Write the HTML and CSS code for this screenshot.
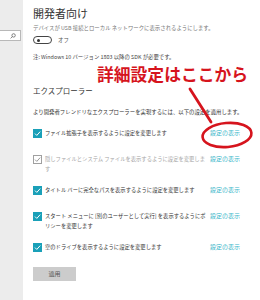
FILE: index.html
```html
<!DOCTYPE html>
<html>
<head>
<meta name="viewport" content="width=device-width, initial-scale=1">
<link rel="stylesheet" href="styles.css">
</head>
<body>

<!-- Sidebar -->
<div class="sidebar">
    <div class="search-box">
        <svg class="search-icon" width="6" height="6" viewBox="0 0 6 6">
            <circle cx="3.6" cy="2.4" r="1.7" fill="none" stroke="#555" stroke-width="0.7"/>
            <line x1="2.4" y1="3.6" x2="0.6" y2="5.4" stroke="#555" stroke-width="0.7"/>
        </svg>
    </div>
</div>

<!-- Page content -->
<div class="content">
    <h1 class="page-title">開発者向け</h1>
    <p class="small muted">デバイスが USB 接続とローカル ネットワークに表示されるようにします。</p>
    <div class="toggle-row">
        <span class="toggle"><span class="knob"></span></span>
        <span class="small">オフ</span>
    </div>
    <p class="small note">注: Windows 10 バージョン 1803 以降の SDK が必要です。</p>

    <h2 class="section-title">エクスプローラー</h2>
    <p class="small desc">より開発者フレンドリなエクスプローラーを実現するには、以下の設定を適用します。</p>

    <div class="setting">
        <span class="check on"><svg viewBox="0 0 9 9"><path d="M2 4.6 L3.8 6.4 L7.2 2.6"/></svg></span>
        <span class="label">ファイル拡張子を表示するように設定を変更します</span>
        <a class="link">設定の表示</a>
    </div>
    <div class="setting">
        <span class="check off"><svg viewBox="0 0 9 9"><path d="M2 4.6 L3.8 6.4 L7.2 2.6"/></svg></span>
        <span class="label disabled">隠しファイルとシステム ファイルを表示するように設定を変更します</span>
        <a class="link">設定の表示</a>
    </div>
    <div class="setting">
        <span class="check on"><svg viewBox="0 0 9 9"><path d="M2 4.6 L3.8 6.4 L7.2 2.6"/></svg></span>
        <span class="label">タイトル バーに完全なパスを表示するように設定を変更します</span>
        <a class="link">設定の表示</a>
    </div>
    <div class="setting">
        <span class="check on"><svg viewBox="0 0 9 9"><path d="M2 4.6 L3.8 6.4 L7.2 2.6"/></svg></span>
        <span class="label">スタート メニューに [別のユーザーとして実行] を表示するようにポリシーを変更します</span>
        <a class="link">設定の表示</a>
    </div>
    <div class="setting last">
        <span class="check on"><svg viewBox="0 0 9 9"><path d="M2 4.6 L3.8 6.4 L7.2 2.6"/></svg></span>
        <span class="label">空のドライブを表示するように設定を変更します</span>
        <a class="link">設定の表示</a>
    </div>

    <button class="apply-btn">適用</button>
</div>

<!-- Annotation -->
<div class="callout">詳細設定はここから</div>
<svg class="callout-mark" width="260" height="300" viewBox="0 0 260 300">
    <line x1="190" y1="89" x2="211" y2="122" stroke="#d6141d" stroke-width="2.8" stroke-linecap="round"/>
    <ellipse cx="227" cy="135" rx="24.5" ry="12" transform="rotate(-5 227 135)" fill="none" stroke="#d6141d" stroke-width="2.6"/>
</svg>

</body>
</html>
```

FILE: styles.css
```css
* {
    box-sizing: border-box;
    margin: 0;
    padding: 0;
}

body {
    font-family: 'Noto Sans CJK JP', 'Noto Sans', sans-serif;
    width: 260px;
    height: 300px;
    display: flex;
    overflow: hidden;
    background: #fff;
    color: #222;
    position: relative;
}

.sidebar {
    width: 23px;
    background-color: #ececec;
    padding-top: 30px;
    flex-shrink: 0;
}

.search-box {
    height: 11px;
    width: 21px;
    background: #fff;
    border: 1px solid #b8b8b8;
    border-left: none;
    display: flex;
    align-items: center;
    justify-content: flex-end;
    padding-right: 4px;
}

.content {
    flex-grow: 1;
    padding-left: 10px;
}

.page-title {
    font-size: 11px;
    font-weight: normal;
    line-height: 14px;
    margin-top: 6px;
    color: #333;
}

.small {
    font-size: 5.4px;
    line-height: 8px;
}

.muted {
    color: #777;
    margin-top: 3.5px;
}

.toggle-row {
    display: flex;
    align-items: center;
    gap: 6px;
    margin-top: 4.5px;
    height: 8px;
    color: #555;
}

.toggle {
    width: 19px;
    height: 8px;
    border: 0.8px solid #444;
    border-radius: 4px;
    display: flex;
    align-items: center;
    padding-left: 2.5px;
    background: #fff;
}

.knob {
    width: 3px;
    height: 3px;
    border-radius: 50%;
    background: #333;
}

.note {
    margin-top: 9px;
    color: #444;
}

.section-title {
    font-size: 7.5px;
    font-weight: normal;
    line-height: 10px;
    margin-top: 24.5px;
    color: #333;
}

.desc {
    margin-top: 12px;
    color: #333;
}

.setting {
    display: flex;
    align-items: flex-start;
    min-height: 15px;
    margin-top: 11px;
    font-size: 5.3px;
    line-height: 10px;
}

.desc + .setting {
    margin-top: 12.5px;
}

.check {
    width: 9px;
    height: 9px;
    margin-top: 0.5px;
    margin-right: 3px;
    flex-shrink: 0;
    display: flex;
}

.check svg {
    width: 9px;
    height: 9px;
}

.check path {
    fill: none;
    stroke-width: 1;
}

.check.on {
    background: #1aa0b8;
}

.check.on path {
    stroke: #fff;
}

.check.off {
    border: 1px solid #a0a0a0;
    background: #fff;
}

.check.off svg {
    margin: -1px;
}

.check.off path {
    stroke: #9a9a9a;
}

.label {
    width: 163.5px;
    flex-shrink: 0;
    color: #333;
}

.label.disabled {
    color: #a5a5a5;
}

.link {
    margin-left: 1.5px;
    font-size: 6px;
    color: #3bb6ca;
    white-space: nowrap;
}

.apply-btn {
    margin-top: 9px;
    width: 43px;
    height: 14px;
    border: none;
    background: #cccccc;
    color: #555;
    font-family: inherit;
    font-size: 6px;
}

.callout {
    position: absolute;
    left: 97px;
    top: 64px;
    font-size: 16.8px;
    line-height: 20px;
    font-weight: bold;
    color: #d6141d;
    white-space: nowrap;
}

.callout-mark {
    position: absolute;
    left: 0;
    top: 0;
}
```
